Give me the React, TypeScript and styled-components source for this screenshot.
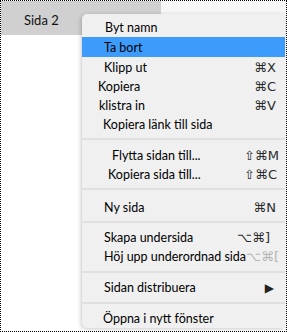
import React from "react";
import styled, { createGlobalStyle } from "styled-components";

const Global = createGlobalStyle`
  html, body { margin: 0; padding: 0; background: #fff; }
  * { box-sizing: border-box; }
`;

const Frame = styled.div`
  position: relative;
  width: 287px;
  height: 332px;
  border: 1px dotted #000;
  background: #fff;
  overflow: hidden;
  font-family: Lato, "Liberation Sans", sans-serif;
`;

const TopBar = styled.div`
  display: flex;
  height: 34px;
  background: #f6f6f6;
`;

const Tab = styled.div`
  width: 160px;
  background: #d0d0d0;
  padding: 11px 0 0 23px;
  font-size: 13px;
  color: #111;
`;

const Menu = styled.div`
  position: absolute;
  left: 81px;
  top: 13px;
  right: 1px;
  bottom: 3px;
  background: #f0f0f0;
  border-radius: 5px 0 0 5px;
  box-shadow: -1px 1px 4px rgba(0, 0, 0, 0.22);
  display: flex;
  flex-direction: column;
  padding-top: 4px;
  font-size: 12.5px;
  color: #000;
`;

const Row = styled.div<{ $indent: number; $h: number; $right: number; $active?: boolean }>`
  display: flex;
  align-items: center;
  height: ${(p) => p.$h}px;
  padding-left: ${(p) => p.$indent}px;
  padding-right: ${(p) => p.$right}px;
  background: ${(p) => (p.$active ? "#3d9bfc" : "transparent")};
`;

const Label = styled.span`
  flex: 1;
  white-space: nowrap;
`;

const Shortcut = styled.span<{ $dim?: boolean }>`
  font-family: "DejaVu Sans", sans-serif;
  font-size: 13px;
  color: ${(p) => (p.$dim ? "#b4b4b4" : "#2a2a2a")};
  white-space: nowrap;
`;

const Arrow = styled.span`
  font-family: "DejaVu Sans", sans-serif;
  font-size: 12px;
  color: #222;
`;

const Sep = styled.div<{ $h: number; $top: number }>`
  height: ${(p) => p.$h}px;
  padding-top: ${(p) => p.$top}px;
  &::after {
    content: "";
    display: block;
    height: 2px;
    background: #e0e0e0;
  }
`;

type Item =
  | {
      kind: "row";
      label: string;
      indent: number;
      h?: number;
      right?: number;
      sc?: string;
      dim?: boolean;
      active?: boolean;
      arrow?: boolean;
    }
  | { kind: "sep"; h: number; top: number };

const items: Item[] = [
  { kind: "row", label: "Byt namn", indent: 23 },
  { kind: "row", label: "Ta bort", indent: 22, h: 20, active: true },
  { kind: "row", label: "Klipp ut", indent: 22, h: 20, sc: "⌘X" },
  { kind: "row", label: "Kopiera", indent: 16, sc: "⌘C" },
  { kind: "row", label: "klistra in", indent: 17, sc: "⌘V" },
  { kind: "row", label: "Kopiera länk till sida", indent: 21 },
  { kind: "sep", h: 12, top: 4 },
  { kind: "row", label: "Flytta sidan till...", indent: 30, right: 6, sc: "⇧⌘M" },
  { kind: "row", label: "Kopiera sida till...", indent: 26, right: 8, sc: "⇧⌘C" },
  { kind: "sep", h: 14, top: 4 },
  { kind: "row", label: "Ny sida", indent: 22, sc: "⌘N" },
  { kind: "sep", h: 11, top: 4 },
  { kind: "row", label: "Skapa undersida", indent: 22, right: 15, sc: "⌥⌘]" },
  { kind: "row", label: "Höj upp underordnad sida", indent: 22, right: 13, sc: "⌥⌘[", dim: true },
  { kind: "sep", h: 12, top: 5 },
  { kind: "row", label: "Sidan distribuera", indent: 22, right: 11, arrow: true },
  { kind: "sep", h: 12, top: 5 },
  { kind: "row", label: "Öppna i nytt fönster", indent: 21 },
];

export default function App() {
  return (
    <>
      <Global />
      <Frame>
        <TopBar>
          <Tab>Sida 2</Tab>
        </TopBar>
        <Menu>
          {items.map((it, i) =>
            it.kind === "sep" ? (
              <Sep key={i} $h={it.h} $top={it.top} />
            ) : (
              <Row
                key={i}
                $indent={it.indent}
                $h={it.h ?? 19}
                $right={it.right ?? 9}
                $active={it.active}
              >
                <Label>{it.label}</Label>
                {it.sc && <Shortcut $dim={it.dim}>{it.sc}</Shortcut>}
                {it.arrow && <Arrow>▶</Arrow>}
              </Row>
            )
          )}
        </Menu>
      </Frame>
    </>
  );
}
